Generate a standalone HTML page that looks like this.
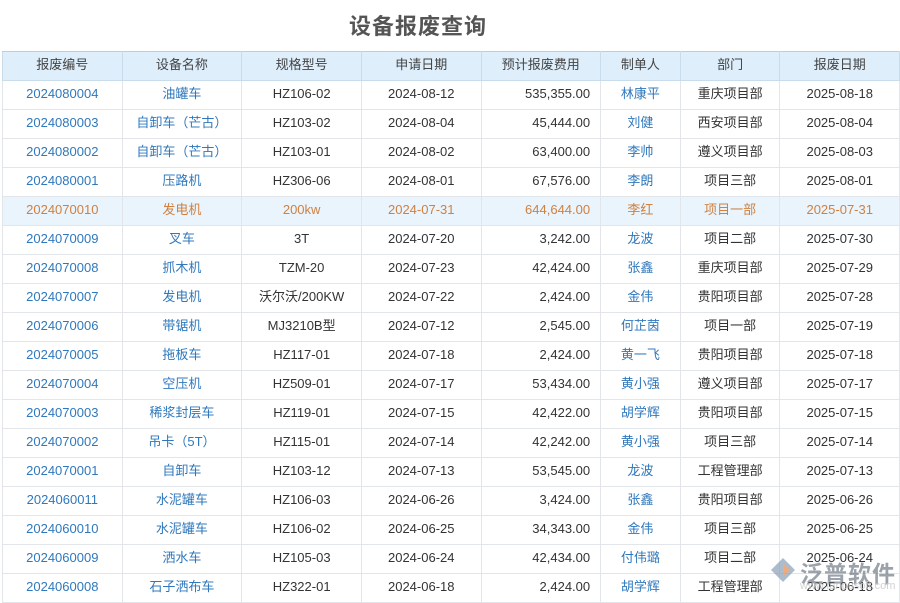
<!DOCTYPE html>
<html><head><meta charset="utf-8"><style>
body{margin:0;width:900px;height:600px;overflow:hidden;background:#fff;font-family:"Liberation Sans","Noto Sans CJK SC",sans-serif;}
h1{position:absolute;top:9px;left:0;width:836px;text-align:center;margin:0;font-size:22px;color:#555;font-weight:bold;letter-spacing:1px}
table{position:absolute;top:51px;left:2px;border-collapse:collapse;table-layout:fixed;font-size:13px}
td,th{height:26px;padding:0 0 2px 0;text-align:center;border:1px solid #e2e6ea;color:#333;white-space:nowrap;overflow:hidden;line-height:16px}
th{background:#deeefb;font-weight:normal;color:#444;border-color:#c9dcec;border-top:1px solid #b7cfe4}
td.b{color:#2f78bd}
td.r{text-align:right;padding-right:10px}
tr.h td{background:#e9f4fd;color:#d0803f}
.logo{position:absolute;left:800px;top:555px;font-size:23px;color:#5a6572;font-weight:bold;opacity:.6;letter-spacing:1px}
.url{position:absolute;left:800px;top:580px;font-size:11px;color:#c8c8c8;opacity:.8}
</style></head><body>
<h1>设备报废查询</h1>
<table>
<colgroup><col style="width:120px"><col style="width:120px"><col style="width:120px"><col style="width:120px"><col style="width:120px"><col style="width:80px"><col style="width:100px"><col style="width:120px"></colgroup>
<tr><th>报废编号</th><th>设备名称</th><th>规格型号</th><th>申请日期</th><th>预计报废费用</th><th>制单人</th><th>部门</th><th>报废日期</th></tr>
<tr><td class="b">2024080004</td><td class="b">油罐车</td><td>HZ106-02</td><td>2024-08-12</td><td class="r">535,355.00</td><td class="b">林康平</td><td>重庆项目部</td><td>2025-08-18</td></tr>
<tr><td class="b">2024080003</td><td class="b">自卸车（芒古）</td><td>HZ103-02</td><td>2024-08-04</td><td class="r">45,444.00</td><td class="b">刘健</td><td>西安项目部</td><td>2025-08-04</td></tr>
<tr><td class="b">2024080002</td><td class="b">自卸车（芒古）</td><td>HZ103-01</td><td>2024-08-02</td><td class="r">63,400.00</td><td class="b">李帅</td><td>遵义项目部</td><td>2025-08-03</td></tr>
<tr><td class="b">2024080001</td><td class="b">压路机</td><td>HZ306-06</td><td>2024-08-01</td><td class="r">67,576.00</td><td class="b">李朗</td><td>项目三部</td><td>2025-08-01</td></tr>
<tr class="h"><td>2024070010</td><td>发电机</td><td>200kw</td><td>2024-07-31</td><td class="r">644,644.00</td><td>李红</td><td>项目一部</td><td>2025-07-31</td></tr>
<tr><td class="b">2024070009</td><td class="b">叉车</td><td>3T</td><td>2024-07-20</td><td class="r">3,242.00</td><td class="b">龙波</td><td>项目二部</td><td>2025-07-30</td></tr>
<tr><td class="b">2024070008</td><td class="b">抓木机</td><td>TZM-20</td><td>2024-07-23</td><td class="r">42,424.00</td><td class="b">张鑫</td><td>重庆项目部</td><td>2025-07-29</td></tr>
<tr><td class="b">2024070007</td><td class="b">发电机</td><td>沃尔沃/200KW</td><td>2024-07-22</td><td class="r">2,424.00</td><td class="b">金伟</td><td>贵阳项目部</td><td>2025-07-28</td></tr>
<tr><td class="b">2024070006</td><td class="b">带锯机</td><td>MJ3210B型</td><td>2024-07-12</td><td class="r">2,545.00</td><td class="b">何芷茵</td><td>项目一部</td><td>2025-07-19</td></tr>
<tr><td class="b">2024070005</td><td class="b">拖板车</td><td>HZ117-01</td><td>2024-07-18</td><td class="r">2,424.00</td><td class="b">黄一飞</td><td>贵阳项目部</td><td>2025-07-18</td></tr>
<tr><td class="b">2024070004</td><td class="b">空压机</td><td>HZ509-01</td><td>2024-07-17</td><td class="r">53,434.00</td><td class="b">黄小强</td><td>遵义项目部</td><td>2025-07-17</td></tr>
<tr><td class="b">2024070003</td><td class="b">稀浆封层车</td><td>HZ119-01</td><td>2024-07-15</td><td class="r">42,422.00</td><td class="b">胡学辉</td><td>贵阳项目部</td><td>2025-07-15</td></tr>
<tr><td class="b">2024070002</td><td class="b">吊卡（5T）</td><td>HZ115-01</td><td>2024-07-14</td><td class="r">42,242.00</td><td class="b">黄小强</td><td>项目三部</td><td>2025-07-14</td></tr>
<tr><td class="b">2024070001</td><td class="b">自卸车</td><td>HZ103-12</td><td>2024-07-13</td><td class="r">53,545.00</td><td class="b">龙波</td><td>工程管理部</td><td>2025-07-13</td></tr>
<tr><td class="b">2024060011</td><td class="b">水泥罐车</td><td>HZ106-03</td><td>2024-06-26</td><td class="r">3,424.00</td><td class="b">张鑫</td><td>贵阳项目部</td><td>2025-06-26</td></tr>
<tr><td class="b">2024060010</td><td class="b">水泥罐车</td><td>HZ106-02</td><td>2024-06-25</td><td class="r">34,343.00</td><td class="b">金伟</td><td>项目三部</td><td>2025-06-25</td></tr>
<tr><td class="b">2024060009</td><td class="b">洒水车</td><td>HZ105-03</td><td>2024-06-24</td><td class="r">42,434.00</td><td class="b">付伟璐</td><td>项目二部</td><td>2025-06-24</td></tr>
<tr><td class="b">2024060008</td><td class="b">石子洒布车</td><td>HZ322-01</td><td>2024-06-18</td><td class="r">2,424.00</td><td class="b">胡学辉</td><td>工程管理部</td><td>2025-06-18</td></tr>
</table>
<svg style="position:absolute;left:768px;top:555px;opacity:.7" width="30" height="30" viewBox="0 0 30 30"><path d="M15 3 L27 15 L15 27 L3 15 Z" fill="#8aa0b8"/><path d="M15 8 L22 15 L15 22 Z" fill="#e08a50"/></svg>
<div class="logo">泛普软件</div>
<div class="url">www.fanpusoft.com</div>
</body></html>
